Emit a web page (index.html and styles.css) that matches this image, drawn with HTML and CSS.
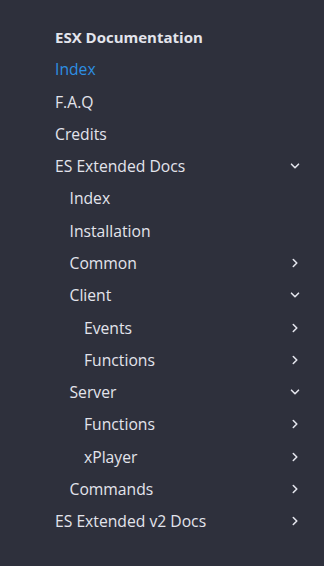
FILE: index.html
```html
<!DOCTYPE html>
<html>
  <head>
    <link rel="stylesheet" href="styles.css">
  </head>
  <body>
    <nav class="sidebar">
      <div class="row title">ESX Documentation</div>
      <ul class="menu">
        <li><div class="row active">Index</div></li>
        <li><div class="row">F.A.Q</div></li>
        <li><div class="row">Credits</div></li>
        <li>
          <div class="row">ES Extended Docs<svg class="chev" viewBox="0 0 10 10"><path d="M1.5 3.2 5 6.7 8.5 3.2"/></svg></div>
          <ul class="menu sub">
            <li><div class="row">Index</div></li>
            <li><div class="row">Installation</div></li>
            <li><div class="row">Common<svg class="chev" viewBox="0 0 10 10"><path d="M3.3 1.5 6.8 5 3.3 8.5"/></svg></div></li>
            <li>
              <div class="row">Client<svg class="chev" viewBox="0 0 10 10"><path d="M1.5 3.2 5 6.7 8.5 3.2"/></svg></div>
              <ul class="menu sub">
                <li><div class="row">Events<svg class="chev" viewBox="0 0 10 10"><path d="M3.3 1.5 6.8 5 3.3 8.5"/></svg></div></li>
                <li><div class="row">Functions<svg class="chev" viewBox="0 0 10 10"><path d="M3.3 1.5 6.8 5 3.3 8.5"/></svg></div></li>
              </ul>
            </li>
            <li>
              <div class="row">Server<svg class="chev" viewBox="0 0 10 10"><path d="M1.5 3.2 5 6.7 8.5 3.2"/></svg></div>
              <ul class="menu sub">
                <li><div class="row">Functions<svg class="chev" viewBox="0 0 10 10"><path d="M3.3 1.5 6.8 5 3.3 8.5"/></svg></div></li>
                <li><div class="row">xPlayer<svg class="chev" viewBox="0 0 10 10"><path d="M3.3 1.5 6.8 5 3.3 8.5"/></svg></div></li>
              </ul>
            </li>
            <li><div class="row">Commands<svg class="chev" viewBox="0 0 10 10"><path d="M3.3 1.5 6.8 5 3.3 8.5"/></svg></div></li>
          </ul>
        </li>
        <li><div class="row">ES Extended v2 Docs<svg class="chev" viewBox="0 0 10 10"><path d="M3.3 1.5 6.8 5 3.3 8.5"/></svg></div></li>
      </ul>
    </nav>
  </body>
</html>
```

FILE: styles.css
```css
body {
  margin: 0;
  height: 566px;
  background: #2e303c;
  font-family: "Open Sans", "Noto Sans", sans-serif;
  font-size: 15.7px;
  font-weight: 500;
  color: #e3e4ec;
}
.sidebar {
  padding: 21px 24px 0 55px;
}
.menu {
  list-style: none;
  margin: 0;
  padding: 0;
}
.menu.sub {
  padding-left: 14.5px;
}
.row {
  display: flex;
  align-items: center;
  justify-content: space-between;
  height: 32.27px;
}
.title {
  font-weight: 700;
  font-size: 15px;
}
.active {
  color: #2d8fe3;
}
.chev {
  width: 10px;
  height: 10px;
  fill: none;
  stroke: #e3e4ec;
  stroke-width: 1.6;
  stroke-linecap: round;
  stroke-linejoin: round;
}
```
